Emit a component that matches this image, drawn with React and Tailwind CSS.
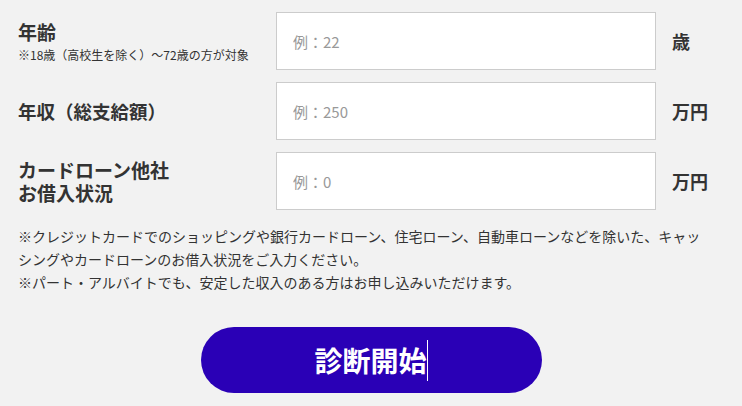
import React from 'react';

const font = { fontFamily: '"Noto Sans CJK JP", "Noto Sans", sans-serif' };

const Row = ({ label, placeholder, unit }) => (
    <div className="flex items-center h-[58px] mb-3">
        <div className="w-[258px] shrink-0 text-[#333]">{label}</div>
        <input
            type="text"
            placeholder={placeholder}
            className="w-[380px] h-[58px] shrink-0 border border-[#cccccc] bg-white px-4 text-[15px] text-[#333] placeholder:text-[#999] outline-none"
        />
        <div className="ml-4 text-[18px] font-bold text-[#333]">{unit}</div>
    </div>
);

export default function App() {
    return (
        <div className="w-full h-[406px] bg-[#f2f2f2] pt-3 px-[18px] overflow-hidden" style={font}>
            <Row
                label={
                    <div>
                        <div className="text-[19px] font-bold leading-[26px]">年齢</div>
                        <div className="text-[12px] leading-[18px] mt-[1px]">※18歳（高校生を除く）〜72歳の方が対象</div>
                    </div>
                }
                placeholder="例：22"
                unit="歳"
            />
            <Row
                label={<div className="text-[18.5px] font-bold leading-6">年収（総支給額）</div>}
                placeholder="例：250"
                unit="万円"
            />
            <Row
                label={
                    <div className="text-[19px] font-bold leading-[23px]">
                        カードローン他社
                        <br />
                        お借入状況
                    </div>
                }
                placeholder="例：0"
                unit="万円"
            />

            <div className="w-[694px] mt-[15px] text-[14px] leading-[23px] text-[#333]">
                <p>※クレジットカードでのショッピングや銀行カードローン、住宅ローン、自動車ローンなどを除いた、キャッシングやカードローンのお借入状況をご入力ください。</p>
                <p>※パート・アルバイトでも、安定した収入のある方はお申し込みいただけます。</p>
            </div>

            <div className="flex justify-center mt-[33px]">
                <button className="w-[341px] h-[66px] rounded-full bg-[#2a00b6] text-white text-[28px] font-bold flex items-center justify-center">
                    <span>診断開始</span>
                    <span className="inline-block w-px h-[41px] bg-white"></span>
                </button>
            </div>
        </div>
    );
}
